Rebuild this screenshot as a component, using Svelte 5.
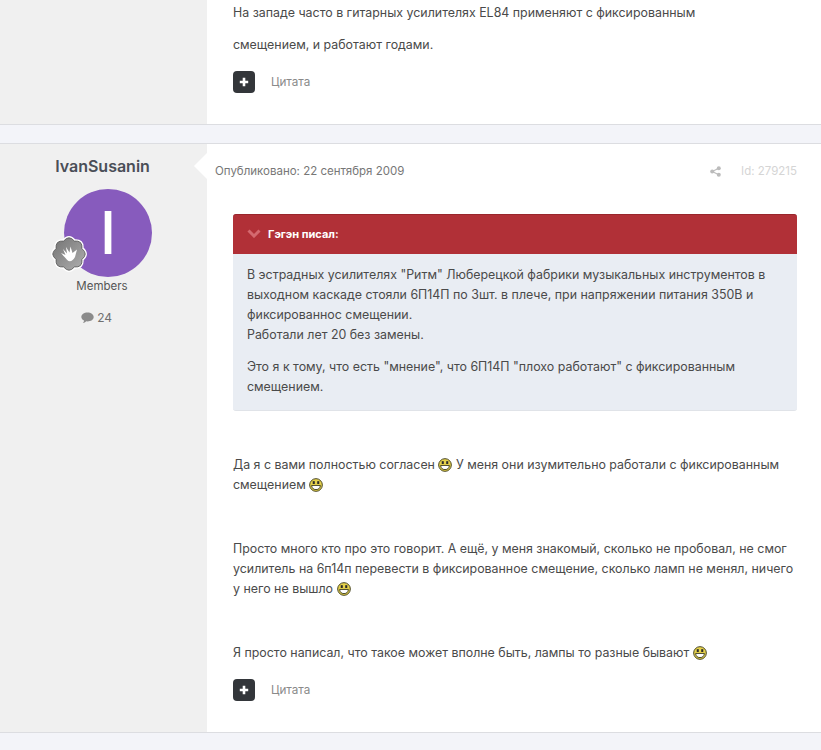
<script>
    // 8 rounded lobes for the rank badge
    function lobes(tip, valley) {
        let d = "";
        for (let i = 0; i < 8; i++) {
            const a = (i * Math.PI) / 4 - Math.PI / 2;
            const b = a + Math.PI / 8;
            const start = i === 0 ? `M${(valley * Math.cos(a - Math.PI / 8)).toFixed(2)} ${(valley * Math.sin(a - Math.PI / 8)).toFixed(2)} ` : "";
            d += `${start}Q${(tip * Math.cos(a)).toFixed(2)} ${(tip * Math.sin(a)).toFixed(2)} ${(valley * Math.cos(b)).toFixed(2)} ${(valley * Math.sin(b)).toFixed(2)} `;
        }
        return d + "Z";
    }
    const star = lobes(19.5, 14);
</script>

{#snippet smile()}
    <svg class="smile" width="14" height="14" viewBox="0 0 15 15">
        <circle cx="7.500" cy="7.500" r="6.800" fill="#e6d24c" stroke="#3f3d1c" stroke-width="1"/>
        <rect x="4" y="3.400" width="2.200" height="3" fill="#2b2b2b"/>
        <rect x="8.800" y="3.400" width="2.200" height="3" fill="#2b2b2b"/>
        <path d="M2.800 8 H12.200 Q11.800 12.400 7.500 12.400 Q3.200 12.400 2.800 8 Z" fill="#fff" stroke="#2f2e14" stroke-width=".9"/>
    </svg>
{/snippet}

{#snippet actions()}
    <div class="actions">
        <span class="plus">
            <svg width="10" height="10" viewBox="0 0 10 10"><path d="M3.700 .8 H6.300 V3.700 H9.200 V6.300 H6.300 V9.200 H3.700 V6.300 H.8 V3.700 H3.700 Z" fill="#fff"/></svg>
        </span>
        <span class="cite">Цитата</span>
    </div>
{/snippet}

<div class="page">
    <article class="post first">
        <aside class="side"></aside>
        <div class="content">
            <p>На западе часто в гитарных усилителях EL84 применяют с фиксированным</p>
            <p class="second">смещением, и работают годами.</p>
            {@render actions()}
        </div>
    </article>

    <article class="post">
        <aside class="side">
            <h3>IvanSusanin</h3>
            <div class="avatar">
                I
                <span class="badge">
                    <svg width="36" height="36" viewBox="-18 -18 36 36">
                        <defs>
                            <linearGradient id="metal" x1="0" y1="0" x2="1" y2="1">
                                <stop offset="0" stop-color="#737373"/>
                                <stop offset="1" stop-color="#b0b0b0"/>
                            </linearGradient>
                        </defs>
                        <path d={star} fill="url(#metal)" stroke="#fff" stroke-width="3.400" paint-order="stroke" stroke-linejoin="round"/>
                        <path d={star} fill="none" stroke="#5f5f5f" stroke-width=".9"/>
                        <path d="M-8 -1 L-3.500 1 L-6 -5 L-2 -.5 L-3 -7 L.5 -1.500 L1.500 -7.500 L3.500 -1 L8 -4.500 L6 3 Q3.500 8 -.5 7 Q-3 5 -8 -1 Z" fill="#fff"/>
                    </svg>
                </span>
            </div>
            <div class="group">Members</div>
            <div class="count">
                <svg width="13" height="12" viewBox="0 0 12 11"><path d="M6 .5 C9.200 .5 11.700 2.300 11.700 4.600 C11.700 6.900 9.200 8.700 6 8.700 L4.900 8.600 C4 9.500 2.900 10 1.700 10.200 C2.400 9.400 2.800 8.600 2.900 7.900 C1.300 7.200 .3 6 .3 4.600 C.3 2.300 2.800 .5 6 .5 Z" fill="#8b8b8b"/></svg>
                24
            </div>
        </aside>
        <div class="content arrow">
            <div class="meta">
                <span>Опубликовано: 22 сентября 2009</span>
                <span class="right">
                    <svg width="11" height="11" viewBox="0 0 11 11">
                        <circle cx="8.800" cy="2.200" r="2" fill="#bbb"/><circle cx="2.200" cy="5.500" r="2" fill="#bbb"/><circle cx="8.800" cy="8.800" r="2" fill="#bbb"/>
                        <path d="M8.800 2.200 L2.200 5.500 L8.800 8.800" stroke="#bbb" stroke-width="1.100" fill="none"/>
                    </svg>
                    <span class="id">Id: 279215</span>
                </span>
            </div>

            <div class="quote">
                <div class="qhead">
                    <svg width="14" height="9" viewBox="0 0 14 9"><path d="M1.500 1.500 L7 7 L12.500 1.500" stroke="#d4696f" stroke-width="3" fill="none"/></svg>
                    <b>Гэгэн писал:</b>
                </div>
                <div class="qbody">
                    <p>В эстрадных усилителях "Ритм" Люберецкой фабрики музыкальных инструментов в выходном каскаде стояли 6П14П по 3шт. в плече, при напряжении питания 350В и фиксированнос смещении.<br>Работали лет 20 без замены.</p>
                    <p>Это я к тому, что есть "мнение", что 6П14П "плохо работают" с фиксированным смещением.</p>
                </div>
            </div>

            <div class="body">
                <p>Да я с вами полностью согласен {@render smile()} У меня они изумительно работали с фиксированным смещением {@render smile()}</p>
                <p>Просто много кто про это говорит. А ещё, у меня знакомый, сколько не пробовал, не смог усилитель на 6п14п перевести в фиксированное смещение, сколько ламп не менял, ничего у него не вышло {@render smile()}</p>
                <p>Я просто написал, что такое может вполне быть, лампы то разные бывают {@render smile()}</p>
            </div>
            {@render actions()}
        </div>
    </article>
</div>

<style>
    :global(body) {
        margin: 0;
        background: #f3f4f9;
    }

    .page {
        font-family: Inter, "Liberation Sans", sans-serif;
        font-size: 12.4px;
        line-height: 20px;
        color: #4a4a4a;
        height: 750px;
        overflow: hidden;
    }

    p {
        margin: 0;
    }

    .post {
        display: flex;
        background: #fff;
        border-bottom: 1px solid #dcdde1;
    }

    .post + .post {
        margin-top: 18px;
        border-top: 1px solid #dcdde1;
    }

    .side {
        width: 207px;
        flex: none;
        background: #f0f0f0;
        text-align: center;
        color: #555;
    }

    .content {
        flex: 1;
        min-width: 0;
        padding: 0 24px 0 26px;
        position: relative;
    }

    .arrow::before {
        content: "";
        position: absolute;
        left: -13px;
        top: 9px;
        border-style: solid;
        border-width: 13px 13px 13px 0;
        border-color: transparent #fff transparent transparent;
    }

    .first .content {
        height: 124px;
        box-sizing: border-box;
        padding-top: 3px;
    }

    .second {
        margin-top: 12px;
    }

    h3 {
        margin: 12px 2px 0 0;
        font-size: 16px;
        line-height: 20px;
        font-weight: 600;
        color: #4a4e57;
    }

    .avatar {
        position: relative;
        width: 88px;
        height: 88px;
        margin: 13px 0 0 64px;
        border-radius: 50%;
        background: #875bbd;
        color: #fff;
        font-size: 59px;
        font-weight: 500;
        line-height: 88px;
        text-align: center;
    }

    .badge {
        position: absolute;
        left: -13px;
        top: 47px;
        width: 36px;
        height: 36px;
        display: block;
        line-height: 0;
    }

    .badge svg {
        overflow: visible;
    }

    .group {
        font-size: 11.5px;
        margin: -1px 3px 0 0;
    }

    .count {
        font-size: 12px;
        color: #707070;
        margin: 12px 14px 0 0;
    }

    .count svg {
        vertical-align: -2px;
    }

    .meta {
        display: flex;
        justify-content: space-between;
        font-size: 11.5px;
        color: #777;
        margin: 17px 0 0 -18px;
        height: 20px;
    }

    .right {
        display: flex;
        align-items: center;
        gap: 20px;
    }

    .id {
        color: #d5d5d5;
    }

    .quote {
        margin-top: 33px;
        background: #e9edf3;
        border-radius: 3px;
        border-bottom: 1px solid #e0e3e8;
    }

    .qhead {
        height: 40px;
        box-sizing: border-box;
        background: #b13037;
        border-top: 1px solid #99262c;
        border-radius: 3px 3px 0 0;
        display: flex;
        align-items: center;
        gap: 7px;
        padding: 0 0 2px 14px;
        color: #fff;
        font-size: 11px;
    }

    .qbody {
        padding: 11px 14px 13px;
    }

    .qbody p + p {
        margin-top: 12px;
    }

    .body {
        margin-top: 44px;
    }

    .body p + p {
        margin-top: 44px;
    }

    .smile {
        vertical-align: -3px;
    }

    .actions {
        display: flex;
        align-items: center;
        gap: 16px;
        margin-top: 16px;
    }

    .plus {
        width: 22px;
        height: 22px;
        border-radius: 4px;
        background: #33363a;
        display: flex;
        align-items: center;
        justify-content: center;
    }

    .cite {
        font-size: 11.7px;
        color: #8a8a8a;
    }

    .post:last-child .content {
        padding-bottom: 31px;
    }
</style>
